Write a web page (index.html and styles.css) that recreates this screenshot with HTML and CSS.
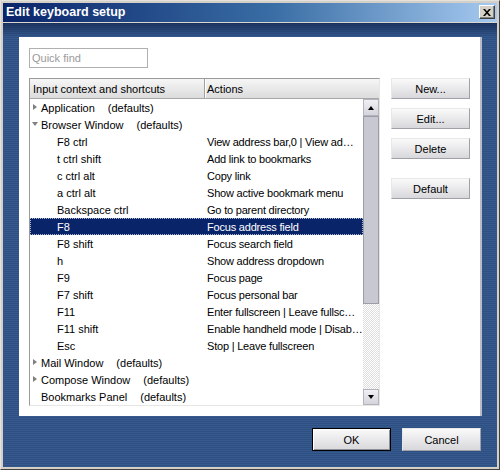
FILE: index.html
```html
<!DOCTYPE html>
<html>
<head>
<meta charset="utf-8">
<link rel="stylesheet" href="styles.css">
</head>
<body>
<div class="window">
  <div class="titlebar">
    <span class="title">Edit keyboard setup</span>
    <span class="close"><svg width="8" height="7" viewBox="0 0 8 7"><path d="M0 0h2l2 2.2L6 0h2L5 3.5 8 7H6L4 4.8 2 7H0l3-3.5z" fill="#000"/></svg></span>
  </div>
  <div class="client">
    <div class="panel">
      <input class="find" type="text" placeholder="Quick find">
      <div class="main">
        <div class="list">
          <div class="header">
            <div class="hcol1">Input context and shortcuts</div>
            <div class="hcol2">Actions</div>
          </div>
          <div class="listbody">
            <div class="rows">
              <div class="row"><div class="c1 top"><span class="exp right"></span>Application<span class="def">(defaults)</span></div><div class="c2"></div></div>
              <div class="row"><div class="c1 top"><span class="exp down"></span>Browser Window<span class="def">(defaults)</span></div><div class="c2"></div></div>
              <div class="row"><div class="c1 child">F8 ctrl</div><div class="c2">View address bar,0 | View ad…</div></div>
              <div class="row"><div class="c1 child">t ctrl shift</div><div class="c2">Add link to bookmarks</div></div>
              <div class="row"><div class="c1 child">c ctrl alt</div><div class="c2">Copy link</div></div>
              <div class="row"><div class="c1 child">a ctrl alt</div><div class="c2">Show active bookmark menu</div></div>
              <div class="row"><div class="c1 child">Backspace ctrl</div><div class="c2">Go to parent directory</div></div>
              <div class="row selected"><div class="c1 child">F8</div><div class="c2">Focus address field</div></div>
              <div class="row"><div class="c1 child">F8 shift</div><div class="c2">Focus search field</div></div>
              <div class="row"><div class="c1 child">h</div><div class="c2">Show address dropdown</div></div>
              <div class="row"><div class="c1 child">F9</div><div class="c2">Focus page</div></div>
              <div class="row"><div class="c1 child">F7 shift</div><div class="c2">Focus personal bar</div></div>
              <div class="row"><div class="c1 child">F11</div><div class="c2">Enter fullscreen | Leave fullsc…</div></div>
              <div class="row"><div class="c1 child">F11 shift</div><div class="c2">Enable handheld mode | Disab…</div></div>
              <div class="row"><div class="c1 child">Esc</div><div class="c2">Stop | Leave fullscreen</div></div>
              <div class="row"><div class="c1 top"><span class="exp right"></span>Mail Window<span class="def">(defaults)</span></div><div class="c2"></div></div>
              <div class="row"><div class="c1 top"><span class="exp right"></span>Compose Window<span class="def">(defaults)</span></div><div class="c2"></div></div>
              <div class="row"><div class="c1 top"><span class="exp"></span>Bookmarks Panel<span class="def">(defaults)</span></div><div class="c2"></div></div>
            </div>
            <div class="scrollbar">
              <div class="sbtn"><span class="arrow up"></span></div>
              <div class="thumb"></div>
              <div class="track"></div>
              <div class="sbtn"><span class="arrow dn"></span></div>
            </div>
          </div>
        </div>
        <div class="side">
          <button class="btn">New...</button>
          <button class="btn">Edit...</button>
          <button class="btn">Delete</button>
          <button class="btn gap">Default</button>
        </div>
      </div>
    </div>
    <div class="footer">
      <button class="btn big ok">OK</button>
      <button class="btn big">Cancel</button>
    </div>
  </div>
</div>
</body>
</html>
```
FILE: styles.css
```css
* { box-sizing: border-box; }
body { margin: 0; font-family: "Liberation Sans", Arial, sans-serif; font-size: 11px; color: #000; }
.window {
  width: 500px; height: 470px;
  background: #d4d0c8;
  border: 1px solid;
  border-color: #e4e2dc #404040 #404040 #e4e2dc;
  padding: 2px;
  display: flex; flex-direction: column;
}
.titlebar {
  height: 20px;
  background: linear-gradient(to right, #0a246a 0%, #3a6ea5 55%, #a6caf0 100%);
  border-bottom: 1px solid #d8d6d0;
  display: flex; align-items: center; justify-content: space-between;
  padding: 0 2px 1px 3px;
}
.title { color: #fff; font-weight: bold; font-size: 12.5px; }
.close {
  width: 16px; height: 14px;
  background: #d4d0c8;
  border: 1px solid; border-color: #fff #404040 #404040 #fff;
  box-shadow: inset -1px -1px #808080;
  display: flex; align-items: center; justify-content: center;
}
.client {
  flex: 1;
  background:
    linear-gradient(to bottom, rgba(8,22,60,0.55) 0, rgba(8,22,60,0) 14px),
    repeating-linear-gradient(to bottom, #2d4f82 0 1px, #365a8e 1px 2px);
  padding: 14px 15px 0 16px;
  display: flex; flex-direction: column;
}
.panel {
  width: 463px; height: 379px;
  background: #fff;
  border-right: 2px solid #b8bcc8;
  padding: 11px 10px 10px 10px;
  display: flex; flex-direction: column; gap: 10px;
}
.find {
  width: 119px; height: 20px;
  border: 1px solid #b0b0b0;
  font: 11px "Liberation Sans", Arial, sans-serif;
  padding: 0 2px; margin: 0;
  outline: none;
}
.find::placeholder { color: #9a9a9a; }
.main { display: flex; gap: 11px; }
.list {
  width: 351px; height: 328px;
  border: 1px solid; border-color: #9a9a9a #e6e6e6 #e6e6e6 #9a9a9a;
  display: flex; flex-direction: column;
}
.header {
  height: 20px;
  background: linear-gradient(to bottom, #f6f6f6, #dcdcdc);
  border-bottom: 1px solid #a8a8a8;
  display: flex; align-items: center;
}
.hcol1 { width: 175px; height: 100%; padding-left: 3px; display: flex; align-items: center; border-right: 1px solid #a0a0a0; box-shadow: 1px 0 #fff; }
.hcol2 { padding-left: 2px; }
.listbody { flex: 1; display: flex; }
.rows { width: 333px; }
.row { height: 17px; display: flex; align-items: center; white-space: nowrap; }
.row.selected { background: #0a246a; color: #fff; outline: 1px dotted #b0b8d0; outline-offset: -1px; }
.c1 { width: 175px; display: flex; align-items: center; }
.c1.child { padding-left: 27px; }
.c2 { width: 158px; padding-left: 2px; overflow: hidden; letter-spacing: -0.2px; }
.exp { width: 11px; height: 7px; position: relative; flex: none; }
.exp.right::before {
  content: ""; position: absolute; left: 3px; top: 0;
  border-left: 4px solid #808080; border-top: 3.5px solid transparent; border-bottom: 3.5px solid transparent;
}
.exp.down::before {
  content: ""; position: absolute; left: 2px; top: 1px;
  border-top: 4px solid #808080; border-left: 3.5px solid transparent; border-right: 3.5px solid transparent;
}
.def { margin-left: 13px; }
.scrollbar { width: 16px; display: flex; flex-direction: column; }
.sbtn {
  height: 17px;
  background: linear-gradient(to bottom, #f0f0f4, #d4d4dc);
  border: 1px solid #b4b4bc;
  display: flex; align-items: center; justify-content: center;
}
.sbtn:last-child { height: 16px; }
.arrow { width: 0; height: 0; border-left: 3.5px solid transparent; border-right: 3.5px solid transparent; }
.arrow.up { border-bottom: 4px solid #000; }
.arrow.dn { border-top: 4px solid #000; }
.thumb { height: 188px; background: #c8c8d2; border: 1px solid #9c9ca6; }
.track { flex: 1; background: repeating-conic-gradient(#ffffff 0 25%, #dedede 0 50%) 0 0 / 2px 2px; }
.side { display: flex; flex-direction: column; gap: 9px; }
.btn {
  width: 79px; height: 21px;
  margin: 0; padding: 0;
  font: 11px "Liberation Sans", Arial, sans-serif; color: #000;
  background: linear-gradient(to bottom, #fafafa, #d8d8dc);
  border: 1px solid; border-color: #e8e8e8 #a0a0a8 #a0a0a8 #e8e8e8;
}
.btn.gap { margin-top: 10px; }
.footer { display: flex; justify-content: flex-end; gap: 11px; margin-top: 12px; padding-right: 1px; width: 463px; }
.btn.big { height: 23px; }
.btn.ok { border: 1px solid #000; box-shadow: inset 1px 1px #fff, inset -1px -1px #909098; }
```
